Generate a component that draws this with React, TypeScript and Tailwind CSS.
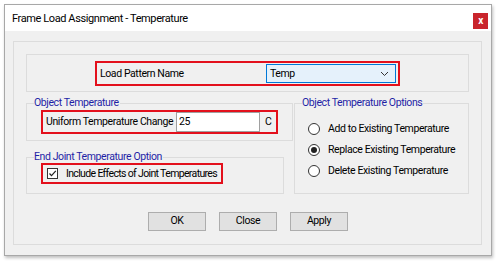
export default function App() {
  const options = [
    { label: 'Add to Existing Temperature', checked: false },
    { label: 'Replace Existing Temperature', checked: true },
    { label: 'Delete Existing Temperature', checked: false },
  ];

  return (
    <div
      className="w-[500px] h-[261px] bg-white pt-[4px] pl-[4px] text-[10.5px] tracking-[-0.4px] text-black whitespace-nowrap"
      style={{ fontFamily: 'Roboto, "Liberation Sans", sans-serif' }}
    >
      <div className="w-[488px] h-[252px] flex flex-col border border-[#a8a8a8] shadow-[1px_2px_3px_rgba(0,0,0,0.25)]">
        {/* Title bar */}
        <div className="h-[26px] bg-white flex items-center justify-between pl-[7px] pr-[3px]">
          <span className="text-[11px] tracking-[-0.4px] leading-none mt-[1px]">Frame Load Assignment - Temperature</span>
          <div className="w-[15px] h-[16px] mt-[6px] bg-[#c9252c] flex items-center justify-center text-white text-[10px] font-bold leading-none">
            x
          </div>
        </div>

        {/* Body */}
        <div className="flex-1 bg-[#f0f0f0] pt-[10px] pl-[8px] pr-[9px] pb-[10px]">
          <div className="h-full border border-[#dcdcdc] px-[12px] pt-[12px] flex flex-col">
            {/* Load pattern */}
            <div className="h-[38px] border border-[#dcdcdc] pl-[68px] pt-[6px]">
              <div className="w-[305px] h-[25px] border-2 border-[#e3101c] flex items-center pl-[3px] pr-[2px]">
                <span className="w-[166px]">Load Pattern Name</span>
                <div className="w-[130px] h-[19px] bg-[#e5f1fb] border border-[#0078d7] flex items-center justify-between pl-[3px] pr-[6px]">
                  <span>Temp</span>
                  <svg width="9" height="6" viewBox="0 0 9 6" fill="none" stroke="#333" strokeWidth="1">
                    <path d="M1 1l3.5 3.5L8 1" />
                  </svg>
                </div>
              </div>
            </div>

            <div className="flex gap-[10px] mt-[5px]">
              <div className="w-[258px] flex flex-col">
                {/* Object Temperature */}
                <fieldset className="border border-[#dcdcdc] h-[44px] px-[14px]">
                  <legend className="text-[#1f1fa6] leading-[12px] -ml-[7px] pr-[1px]">Object Temperature</legend>
                  <div className="w-[237px] h-[24px] border-2 border-[#e3101c] flex items-center pl-[3px] mt-[1px]">
                    <span className="w-[130px]">Uniform Temperature Change</span>
                    <div className="w-[84px] h-[20px] bg-white border border-[#a0a0a0] flex items-center pl-[2px]">25</div>
                    <span className="ml-[5px]">C</span>
                  </div>
                </fieldset>

                {/* End joint */}
                <fieldset className="border border-[#dcdcdc] h-[43px] mt-[10px] px-[15px]">
                  <legend className="text-[#1f1fa6] leading-[12px] -ml-[8px] pr-[1px]">End Joint Temperature Option</legend>
                  <div className="w-[182px] h-[21px] -ml-[1px] border-2 border-[#e3101c] flex items-center pl-[4px]">
                    <div className="w-[11px] h-[11px] border border-[#333] bg-white flex items-center justify-center">
                      <svg width="9" height="9" viewBox="0 0 9 9" fill="none" stroke="#222" strokeWidth="1.2">
                        <path d="M1.5 4.5l2 2.2L7.8 1.8" />
                      </svg>
                    </div>
                    <span className="ml-[8px] tracking-[-0.65px]">Include Effects of Joint Temperatures</span>
                  </div>
                </fieldset>
              </div>

              {/* Options */}
              <fieldset className="w-[177px] border border-[#dcdcdc] h-[97px] px-[13px]">
                <legend className="text-[#1f1fa6] leading-[12px] -ml-[6px] pr-[1px]">Object Temperature Options</legend>
                <div className="flex flex-col gap-[9px] mt-[14px]">
                  {options.map((o) => (
                    <div key={o.label} className="flex items-center h-[12px]">
                      <div className="w-[12px] h-[12px] shrink-0 rounded-full border border-[#333] bg-white flex items-center justify-center">
                        {o.checked && <div className="w-[6px] h-[6px] rounded-full bg-[#222]" />}
                      </div>
                      <span className="ml-[8px]">{o.label}</span>
                    </div>
                  ))}
                </div>
              </fieldset>
            </div>

            {/* Buttons */}
            <div className="flex justify-center gap-[13px] mt-[18px] ml-[1px]">
              {['OK', 'Close', 'Apply'].map((b) => (
                <button
                  key={b}
                  className="w-[58px] h-[19px] bg-[#e1e1e1] border border-[#adadad] flex items-center justify-center leading-none"
                >
                  {b}
                </button>
              ))}
            </div>
          </div>
        </div>
      </div>
    </div>
  );
}
